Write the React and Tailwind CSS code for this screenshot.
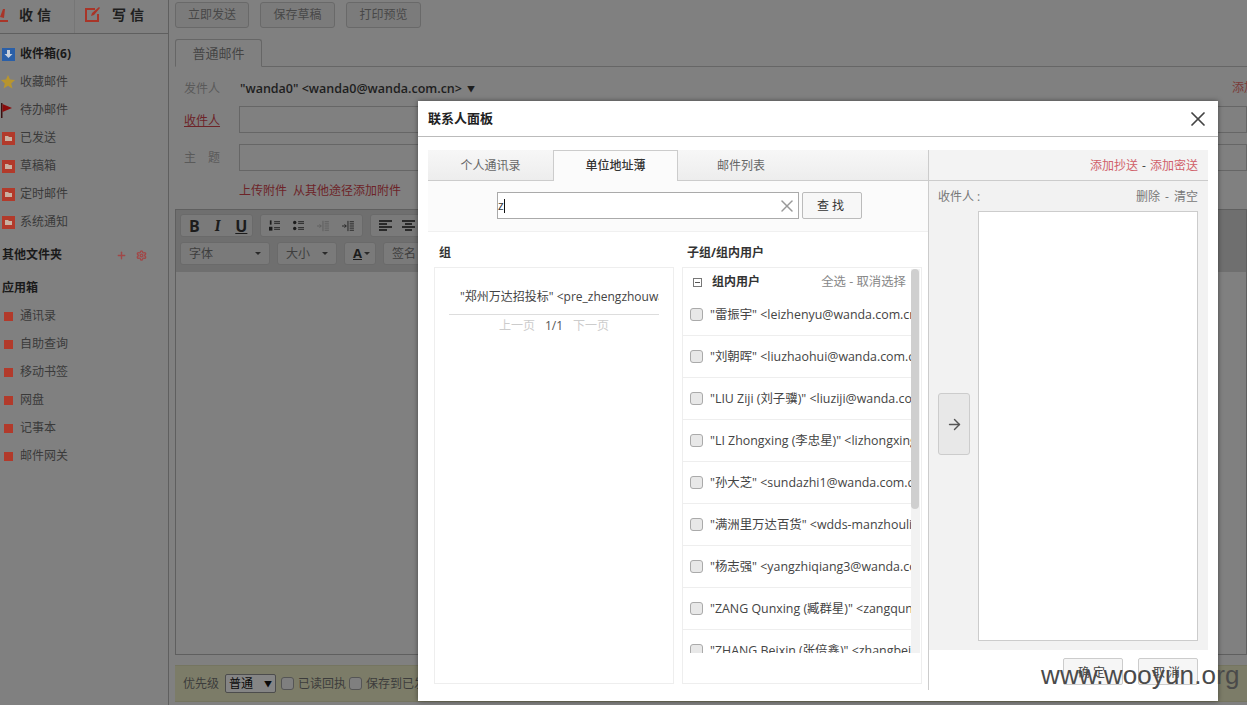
import React from "react";
import { X, ArrowRight, Plus, Settings } from "lucide-react";

const font = { fontFamily: '"Open Sans","Noto Sans CJK SC",sans-serif' };

function Folder() {
  return (
    <svg width="13" height="13" viewBox="0 0 13 13" className="shrink-0">
      <rect width="13" height="13" fill="#b23a2b" />
      <path d="M3 4h3l1 1h3v4H3z" fill="#c9b0a0" />
    </svg>
  );
}

function SideRow({ icon, label, bold }) {
  return (
    <div className="h-7 flex items-center">
      <div className="w-5 flex items-center pl-[2px] shrink-0">{icon}</div>
      <span className={bold ? "text-[12px] font-bold text-[#1a1a1a]" : "text-[12px] text-[#3a3a3a]"}>{label}</span>
    </div>
  );
}

const Square = () => <div className="w-[9px] h-[9px] bg-[#b23a2b] ml-[2px]" />;

function Sidebar() {
  return (
    <div className="w-[169px] shrink-0 h-full border-r border-[#5f5f5f] overflow-hidden">
      <div className="h-[34px] border-b border-[#5f5f5f] flex items-center relative">
        <div className="w-[75px] h-full flex items-center border-r border-[#767676] pb-[4px]">
          <svg width="9" height="16" viewBox="0 0 9 16" className="mr-[10px]">
            <path d="M0 13h8v2H0zM3 2l2 0-1 9-4-1z" fill="#a83528" />
          </svg>
          <span className="text-[14px] font-bold text-[#1e1e1e] tracking-[4px]">收信</span>
        </div>
        <div className="h-full flex items-center pb-[4px]">
          <svg width="17" height="17" viewBox="0 0 17 17" className="ml-[9px] mr-[11px]">
            <path d="M1 2h10v2H3v10h10V8h2v8H1z" fill="#a83528" />
            <path d="M7 10l1-3 7-6 1 1-6 7z" fill="#a83528" />
          </svg>
          <span className="text-[14px] font-bold text-[#1e1e1e] tracking-[4px]">写信</span>
        </div>
      </div>
      <div className="pt-[6px]">
        <SideRow
          bold
          label="收件箱(6)"
          icon={
            <svg width="13" height="13" viewBox="0 0 13 13">
              <rect width="13" height="13" fill="#2a5fa8" />
              <path d="M5 2h3v4h2.500l-4 4-4-4H5z" fill="#c8d0dc" />
            </svg>
          }
        />
        <SideRow
          label="收藏邮件"
          icon={
            <svg width="14" height="14" viewBox="0 0 14 14" className="-ml-[1px]">
              <path d="M7 0l2 4.600 5 .5-3.800 3.300 1.200 5L7 10.700l-4.400 2.700 1.200-5L0 5.100l5-.5z" fill="#b8952e" />
            </svg>
          }
        />
        <SideRow
          label="待办邮件"
          icon={
            <svg width="12" height="15" viewBox="0 0 12 15" className="-ml-[1px]">
              <path d="M0 0h1.500v15H0z" fill="#3a1010" />
              <path d="M1.500 1l9.500 4-9.500 4z" fill="#8a0a0a" />
            </svg>
          }
        />
        <SideRow label="已发送" icon={<Folder />} />
        <SideRow label="草稿箱" icon={<Folder />} />
        <SideRow label="定时邮件" icon={<Folder />} />
        <SideRow label="系统通知" icon={<Folder />} />
      </div>
      <div className="h-[38px] flex items-center justify-between pl-[2px] pr-[21px]">
        <span className="text-[12px] font-bold text-[#1a1a1a]">其他文件夹</span>
        <div className="flex items-center gap-[9px]">
          <Plus size={11} strokeWidth={3} className="text-[#a04848]" />
          <Settings size={11} strokeWidth={3} className="text-[#a04848]" />
        </div>
      </div>
      <div className="h-[28px] flex items-center pl-[2px] mb-[-1px] text-[12px] font-bold text-[#1a1a1a]">应用箱</div>
      <div className="pt-[1px]">
        {["通讯录", "自助查询", "移动书签", "网盘", "记事本", "邮件网关"].map((t) => (
          <SideRow key={t} label={t} icon={<Square />} />
        ))}
      </div>
    </div>
  );
}

function TopBtn({ children, className = "w-[75px]" }) {
  return (
    <div className={"h-[26px] border border-[#696969] rounded-[3px] bg-[#7b7b7b] flex items-center justify-center text-[12px] text-[#484848] " + className}>
      {children}
    </div>
  );
}

function Grp({ children, className = "" }) {
  return (
    <div className={"h-[23px] bg-[#7a7a7a] border border-[#6a6a6a] rounded-[3px] flex items-center px-[8px] " + className}>
      {children}
    </div>
  );
}

function Main() {
  return (
    <div className="flex-1 min-w-0 h-full pl-[6px] overflow-hidden">
      <div className="flex gap-[11px] pt-[2px]">
        <TopBtn className="w-[74px]">立即发送</TopBtn>
        <TopBtn>保存草稿</TopBtn>
        <TopBtn>打印预览</TopBtn>
      </div>
      <div className="mt-[11px] border-b border-[#666] h-[28px]">
        <div className="w-[87px] h-[28px] border border-[#666] border-b-[#808080] rounded-t-[3px] flex items-center justify-center pt-[1px] text-[13px] text-[#444] bg-[#808080]">
          普通邮件
        </div>
      </div>
      <div className="flex items-center h-[26px] mt-[9px] pl-[9px]">
        <span className="w-[56px] text-[12px] text-[#5a5a5a]">发件人</span>
        <span className="text-[12.500px] font-semibold text-[#1e1e1e] whitespace-nowrap">"wanda0" &lt;wanda0@wanda.com.cn&gt;</span>
        <span className="ml-[5px] text-[8px] text-[#1e1e1e]">▼</span>
        <span className="absolute left-[1232px] top-[79px] text-[12px] text-[#7a3a38] whitespace-nowrap">添加</span>
      </div>
      <div className="flex items-center h-[27px] mt-[4px] pl-[9px]">
        <span className="w-[55px] pt-[3px] text-[12px] text-[#6d2428] underline">收件人</span>
        <div className="flex-1 h-[27px] border border-[#666]" />
      </div>
      <div className="flex items-center h-[27px] mt-[11px] pl-[9px]">
        <span className="w-[55px] text-[12px] text-[#5a5a5a] tracking-[12px] whitespace-nowrap">主题</span>
        <div className="flex-1 h-[27px] border border-[#666]" />
      </div>
      <div className="flex gap-[6px] h-[18px] items-center mt-[11px] pl-[64px] text-[12px] text-[#6d2428]">
        <span>上传附件</span>
        <span>从其他途径添加附件</span>
      </div>
      <div className="mt-[9px] h-[446px] border border-[#5f5f5f] flex flex-col">
        <div className="h-[62px] bg-[#6f6f6f] px-[4px] pt-[4px] flex flex-col gap-[5px]">
          <div className="flex gap-[7px]">
            <Grp className="gap-[15px] w-[73px] font-bold text-[16px] text-[#1c1c1c]">
              <span>B</span>
              <span className="italic font-serif">I</span>
              <span className="underline">U</span>
            </Grp>
            <Grp className="w-[103px] gap-[13px]">
              <ListIcon dots={false} />
              <ListIcon dots />
              <IndentIcon light />
              <IndentIcon />
            </Grp>
            <Grp className="w-[70px] gap-[10px]">
              <AlignIcon />
              <AlignIcon center />
            </Grp>
          </div>
          <div className="flex gap-[7px] text-[12px] text-[#3e3e3e]">
            <Grp className="w-[90px] justify-between">
              <span>字体</span>
              <Caret />
            </Grp>
            <Grp className="w-[60px] justify-between">
              <span>大小</span>
              <Caret />
            </Grp>
            <Grp className="w-[32px] gap-[2px] px-[5px]">
              <span className="font-bold text-[13px] text-[#1c1c1c] underline">A</span>
              <Caret />
            </Grp>
            <Grp className="w-[60px]">
              <span>签名</span>
            </Grp>
          </div>
        </div>
        <div className="flex-1 bg-[#808080]" />
      </div>
      <div className="mt-[10px] h-[37px] bg-[#7c7c68] border-y border-[#757560] flex items-center pl-[8px] text-[12px] text-[#3c3c3c]">
        <span>优先级</span>
        <div className="ml-[6px] w-[51px] h-[19px] border border-[#4c4c4c] rounded-[2px] bg-[#858585] flex items-center justify-between px-[3px] text-[#0a0a0a]">
          普通 <span className="text-[8px]">▼</span>
        </div>
        <DimCheck className="ml-[5px] mr-[4px]" />
        <span>已读回执</span>
        <DimCheck className="ml-[3px] mr-[4px]" />
        <span className="whitespace-nowrap">保存到已发送</span>
      </div>
    </div>
  );
}

const Caret = () => <span className="w-0 h-0 border-x-[3px] border-x-transparent border-t-[3px] border-t-[#2a2a2a]" />;

function ListIcon({ dots }) {
  return (
    <svg width="13" height="13" viewBox="0 0 13 13">
      {dots ? (
        <g fill="#1c1c1c">
          <circle cx="2" cy="3" r="2" />
          <circle cx="2" cy="10" r="2" />
        </g>
      ) : (
        <g fill="#1c1c1c">
          <rect x="1" y="0.500" width="2" height="5" />
          <rect x="0" y="8" width="4" height="4.500" />
        </g>
      )}
      <path d="M6 2h7M6 4h7M6 9h7M6 11h7" stroke="#1c1c1c" strokeWidth="1" />
    </svg>
  );
}

function IndentIcon({ light }) {
  const c = light ? "#5c5c5c" : "#1c1c1c";
  return (
    <svg width="14" height="12" viewBox="0 0 14 12">
      <path d="M7 0v12M9 1h5M9 3.500h5M9 6h5M9 8.500h5M9 11h5M0 6h5M3 4l2 2-2 2" stroke={c} strokeWidth="1" fill="none" />
    </svg>
  );
}

function AlignIcon({ center }) {
  return (
    <svg width="13" height="11" viewBox="0 0 13 11">
      {center ? (
        <path d="M0 1h13M3 4h7M0 7h13M3 10h7" stroke="#111" strokeWidth="1.600" />
      ) : (
        <path d="M0 1h13M0 4h8M0 7h13M0 10h8" stroke="#111" strokeWidth="1.600" />
      )}
    </svg>
  );
}

function Check({ className = "" }) {
  return <div className={"w-[13px] h-[13px] shrink-0 border border-[#aaa] rounded-[3px] bg-[#e8e8e8] " + className} />;
}

function DimCheck({ className = "" }) {
  return <div className={"w-[13px] h-[13px] shrink-0 border border-[#555] rounded-[3px] bg-[#7f7f7f] " + className} />;
}

const users = [
  '"雷振宇" <leizhenyu@wanda.com.cn>',
  '"刘朝晖" <liuzhaohui@wanda.com.cn>',
  '"LIU Ziji (刘子骥)" <liuziji@wanda.com.cn>',
  '"LI Zhongxing (李忠星)" <lizhongxing@wanda.com.cn>',
  '"孙大芝" <sundazhi1@wanda.com.cn>',
  '"满洲里万达百货" <wdds-manzhouli@wanda.com.cn>',
  '"杨志强" <yangzhiqiang3@wanda.com.cn>',
  '"ZANG Qunxing (臧群星)" <zangqunxing@wanda.com.cn>',
  '"ZHANG Beixin (张倍鑫)" <zhangbeixin@wanda.com.cn>',
];

function Modal() {
  return (
    <div className="absolute left-[418px] top-[101px] w-[800px] h-[600px] bg-white flex flex-col shadow-[0_0_5px_rgba(0,0,0,0.45)]" style={font}>
      <div className="h-[36px] shrink-0 border-b border-[#bbb] flex items-center justify-between pl-[10px] pr-[8px]">
        <span className="text-[13px] font-bold text-[#222]">联系人面板</span>
        <X size={24} strokeWidth={1.700} className="text-[#444]" />
      </div>
      <div className="flex mx-[10px] mt-[13px] h-[540px]">
        <div className="w-[501px] shrink-0 border-r border-[#ccc] flex flex-col">
          <div className="h-[31px] bg-linear-to-b from-[#f7f7f7] to-[#ededed] border-b border-[#ccc] flex shrink-0">
            <div className="w-[125px] h-[31px] flex items-center justify-center text-[12px] text-[#666]">个人通讯录</div>
            <div className="w-[125px] h-[31px] bg-[#fbfbfb] border-x border-t border-[#ccc] flex items-center justify-center text-[12px] font-medium text-[#333]">单位地址薄</div>
            <div className="w-[126px] h-[31px] flex items-center justify-center text-[12px] text-[#666]">邮件列表</div>
          </div>
          <div className="h-[51px] shrink-0 bg-[#fbfbfb] border-b border-[#f0f0f0] flex items-start justify-center gap-[3px] pt-[11px] pl-[3px]">
            <div className="w-[302px] h-[27px] bg-white border border-[#aaa] flex items-center justify-between pr-[1px]">
              <span className="text-[12px] text-[#333] leading-none flex items-center">
                z<span className="w-px h-[14px] bg-[#111]" />
              </span>
              <X size={20} strokeWidth={1.800} className="text-[#999]" />
            </div>
            <div className="w-[60px] h-[27px] bg-[#f7f7f7] border border-[#bbb] rounded-[2px] flex items-center justify-center text-[12px] text-[#333] tracking-[3px]">查找</div>
          </div>
          <div className="flex-1 min-h-0 flex pl-[6px] gap-[8px]">
            <div className="w-[240px] flex flex-col">
              <div className="h-[35px] flex items-center pl-[5px] pt-[6px] text-[12px] font-bold text-[#333] shrink-0">组</div>
              <div className="flex-1 border border-[#eee] px-[14px] pt-[15px]">
                <div className="h-[32px] border-b border-[#ddd] pl-[11px] overflow-hidden whitespace-nowrap text-[12px] text-[#444] leading-[28px]">
                  "郑州万达招投标" &lt;pre_zhengzhouwanda@wanda.com.cn&gt;
                </div>
                <div className="flex justify-center gap-[10px] h-[22px] items-center text-[12px] text-[#ccc]">
                  <span>上一页</span>
                  <span className="text-[#555]">1/1</span>
                  <span>下一页</span>
                </div>
              </div>
            </div>
            <div className="w-[240px] flex flex-col">
              <div className="h-[35px] flex items-center pl-[5px] pt-[6px] text-[12px] font-bold text-[#333] shrink-0">子组/组内用户</div>
              <div className="flex-1 border border-[#eee] relative">
                <div className="h-[385px] overflow-hidden w-[228px]">
                  <div className="h-[26px] flex items-center pt-[2px] pl-[10px] pr-[5px]">
                    <div className="w-[9px] h-[9px] border border-[#777] flex items-center justify-center">
                      <div className="w-[5px] h-px bg-[#555]" />
                    </div>
                    <span className="ml-[10px] text-[12px] font-bold text-[#333]">组内用户</span>
                    <span className="ml-auto text-[12.400px] text-[#888]">全选 - 取消选择</span>
                  </div>
                  {users.map((u) => (
                    <div key={u} className="h-[42px] border-b border-[#eee] flex items-center pl-[7px] overflow-hidden whitespace-nowrap text-[12.400px] text-[#444]">
                      <Check className="mr-[7px]" />
                      <span className="pt-[1px]">{u}</span>
                    </div>
                  ))}
                </div>
                <div className="absolute right-[1px] top-[1px] w-[9px] h-[384px] bg-[#f2f2f2]">
                  <div className="w-[8px] h-[240px] bg-[#cfcfcf] rounded-[4px]" />
                </div>
              </div>
            </div>
          </div>
          <div className="h-[6px] shrink-0" />
        </div>
        <div className="flex-1 flex flex-col min-w-0">
          <div className="h-[500px] bg-[#f2f2f2] flex flex-col">
            <div className="h-[31px] shrink-0 border-b border-[#ccc] flex items-center justify-end pt-[2px] pr-[10px] text-[12px] text-[#d0606a] bg-[#f3f3f3]">
              添加抄送<span className="text-[#444] mx-[4px]">-</span>添加密送
            </div>
            <div className="h-[30px] shrink-0 flex items-center justify-between pt-[2px] pl-[9px] pr-[10px] text-[12px] text-[#777]">
              <span>收件人 :</span>
              <span>
                删除<span className="mx-[5px]">-</span>清空
              </span>
            </div>
            <div className="flex-1 min-h-0 flex pr-[10px] pb-[9px]">
              <div className="w-[49px] shrink-0 flex items-center pl-[9px] pb-[4px]">
                <div className="w-[32px] h-[62px] border border-[#ccc] rounded-[3px] bg-[#e8e8e8] flex items-center justify-center">
                  <ArrowRight size={17} strokeWidth={2} className="text-[#555]" />
                </div>
              </div>
              <div className="flex-1 bg-white border border-[#ccc]" />
            </div>
          </div>
          <div className="flex justify-end gap-[15px] pt-[8px] pr-[10px]">
            <div className="w-[60px] h-[27px] border border-[#ccc] rounded-[2px] bg-[#f6f6f6] flex items-center justify-center pt-[2px] text-[12px] text-[#444] tracking-[3px]">确定</div>
            <div className="w-[60px] h-[27px] border border-[#ccc] rounded-[2px] bg-[#f6f6f6] flex items-center justify-center pt-[2px] text-[12px] text-[#444] tracking-[3px]">取消</div>
          </div>
        </div>
      </div>
    </div>
  );
}

export default function App() {
  return (
    <div className="relative w-[1247px] h-[705px] overflow-hidden bg-[#808080]" style={font}>
      <div className="flex h-full">
        <Sidebar />
        <Main />
      </div>
      <Modal />
      <div className="absolute left-[1041px] top-[657px] text-[26px] leading-[36px] text-[#4a4a4a] tracking-[0.150px]" style={{ fontFamily: '"Liberation Sans",sans-serif' }}>
        www.wooyun.org
      </div>
    </div>
  );
}
